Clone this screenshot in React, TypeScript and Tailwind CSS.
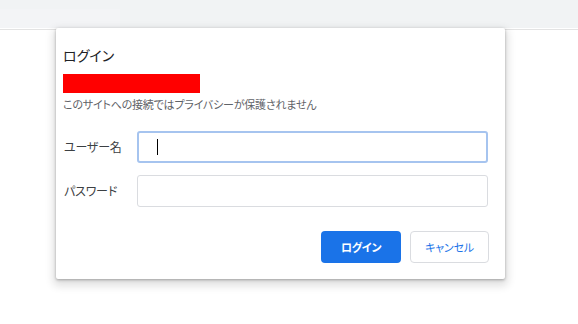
import React from 'react';

const font = "font-['Noto_Sans_CJK_JP','Noto_Sans',sans-serif] [font-feature-settings:'palt']";

const FieldRow: React.FC<{ label: string; focused?: boolean }> = ({ label, focused }) => (
  <div className="flex items-center">
    <div className="w-[74px] pl-px text-[12px] tracking-[-0.2px] text-[#3c4043]">{label}</div>
    <div
      className={`flex h-8 flex-1 items-center rounded-[3px] bg-white ${
        focused ? 'border-2 border-[#a6c4ef]' : 'border border-[#dadce0]'
      }`}
    >
      {focused && <span className="ml-[18px] h-4 w-px bg-black" />}
    </div>
  </div>
);

export default function App() {
  return (
    <div className={`relative h-[324px] w-[578px] overflow-hidden bg-white ${font}`}>
      {/* browser chrome behind the dialog */}
      <div className="flex h-[28px] items-end bg-[#f1f3f4]">
        <div className="h-[19px] w-[120px] bg-[#f3f4f6]" />
      </div>
      <div className="mt-px h-px bg-[#e3e3e3]" />

      {/* auth dialog */}
      <div className="absolute left-[56px] top-[28px] flex w-[449px] flex-col rounded-[2px] bg-white pb-4 pl-[7px] pr-4 pt-[17px] shadow-[0_1px_3px_rgba(0,0,0,0.3),0_4px_8px_3px_rgba(0,0,0,0.12)]">
        <h2 className="text-[14px] leading-5 text-[#202124]">ログイン</h2>
        <div className="mt-[9px] h-[19px] w-[137px] bg-[#ff0000]" />
        <p className="mt-[3px] text-[11px] leading-4 tracking-[-0.2px] text-[#5f6368]">
          このサイトへの接続ではプライバシーが保護されません
        </p>

        <div className="mt-[19px] flex flex-col gap-3 pr-px">
          <FieldRow label="ユーザー名" focused />
          <FieldRow label="パスワード" />
        </div>

        <div className="mt-6 flex justify-end gap-[9px]">
          <button className="h-8 w-20 rounded-[4px] bg-[#1a73e8] text-[11px] font-bold tracking-[-0.3px] text-white">
            ログイン
          </button>
          <button className="h-8 w-[79px] rounded-[4px] border border-[#dadce0] bg-white text-[11px] tracking-[-0.2px] text-[#1a73e8]">
            キャンセル
          </button>
        </div>
      </div>
    </div>
  );
}
